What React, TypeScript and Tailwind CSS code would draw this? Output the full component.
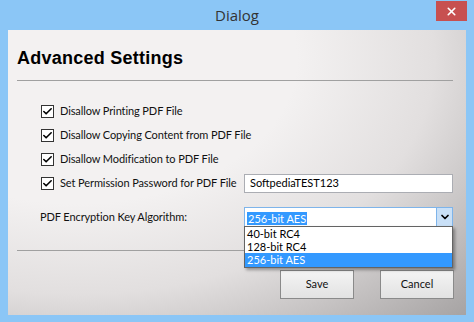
import { Check, ChevronDown, X } from 'lucide-react';

const ui = "font-['Lato','Noto_Sans',sans-serif]";

function Box({ label }: { label: string }) {
  return (
    <div className="flex items-center h-[24px]">
      <div className="w-[13px] h-[13px] border border-[#333] bg-white flex items-center justify-center">
        <Check size={11} strokeWidth={3.5} className="text-black" />
      </div>
      <span className="ml-[6px] text-[11px] tracking-[-0.1px] text-[#111]">{label}</span>
    </div>
  );
}

export default function App() {
  return (
    <div className={`w-[474px] h-[322px] bg-[#8bc6f6] flex flex-col ${ui}`}>
      <div className="relative h-[30px] flex items-center justify-center">
        <span className="font-['Open_Sans',sans-serif] text-[15px] text-[#333] pt-[1px]">Dialog</span>
        <button className="absolute top-[1px] right-[7px] w-[31px] h-[20px] bg-[#c75050] flex items-center justify-center">
          <X size={13} strokeWidth={3} className="text-white" />
        </button>
      </div>
      <div className="relative flex-1 mx-[8px] mb-[7px] bg-[radial-gradient(ellipse_at_15%_10%,#f3f1f1_40%,#e2dfdf_65%,#a6a3a3_100%)] pl-[9px] pr-[13px] flex flex-col">
        <h1 className="mt-[18px] h-[20px] font-['Liberation_Sans',sans-serif] font-bold text-[18px] leading-[20px] tracking-[0.25px] text-black">
          Advanced Settings
        </h1>
        <div className="mt-[12px] h-[2px] border-t border-[#a0a0a0] border-b-white" />
        <div className="mt-[17px] pl-[24px] flex flex-col">
          <Box label="Disallow Printing PDF File" />
          <Box label="Disallow Copying Content from PDF File" />
          <Box label="Disallow Modification to PDF File" />
          <div className="flex items-center h-[25px]">
            <div className="w-[13px] h-[13px] border border-[#333] bg-white flex items-center justify-center">
              <Check size={11} strokeWidth={3.5} className="text-black" />
            </div>
            <span className="ml-[6px] text-[11px] tracking-[-0.1px] text-[#111] w-[184px] whitespace-nowrap">Set Permission Password for PDF File</span>
            <div className="w-[209px] h-[19px] border border-[#abadb3] bg-white flex items-center pl-[5px] text-[11px] text-black">
              SoftpediaTEST123
            </div>
          </div>
          <div className="flex items-center h-[24px] mt-[9px] -ml-[1px]">
            <span className="text-[11px] tracking-[-0.1px] text-[#111] w-[204px]">PDF Encryption Key Algorithm:</span>
            <div className="w-[209px] h-[20px] border border-[#7eb4ea] bg-white flex items-center">
              <div className="flex-1 pl-[2px]">
                <span className="bg-[#3399ff] text-white text-[11px] leading-[16px] px-[1px]">256-bit AES</span>
              </div>
              <div className="w-[16px] h-full bg-[#c9e0f7] border-l border-[#7eb4ea] flex items-center justify-center">
                <ChevronDown size={12} strokeWidth={3.5} className="text-black" />
              </div>
            </div>
          </div>
        </div>
        <div className="mt-[21px] h-[2px] border-t border-[#a0a0a0] border-b-white" />
        <div className="mt-[18px] flex justify-end gap-[26px] -mr-[1px]">
          <button className="w-[74px] h-[29px] border border-[#8a8a8a] bg-[linear-gradient(#f4f4f4,#e2e2e2)] text-[11px] text-[#111]">Save</button>
          <button className="w-[74px] h-[29px] border border-[#8a8a8a] bg-[linear-gradient(#f4f4f4,#e2e2e2)] text-[11px] text-[#111]">Cancel</button>
        </div>
        <div className="absolute left-[236px] top-[196px] w-[209px] border border-[#646464] bg-white shadow-[2px_2px_3px_rgba(0,0,0,0.35)] flex flex-col text-[11px] text-black">
          <div className="h-[13px] leading-[13px] pl-[2px]">40-bit RC4</div>
          <div className="h-[13px] leading-[13px] pl-[2px]">128-bit RC4</div>
          <div className="h-[14px] leading-[14px] pl-[2px] bg-[#3399ff] text-white">256-bit AES</div>
        </div>
      </div>
    </div>
  );
}
